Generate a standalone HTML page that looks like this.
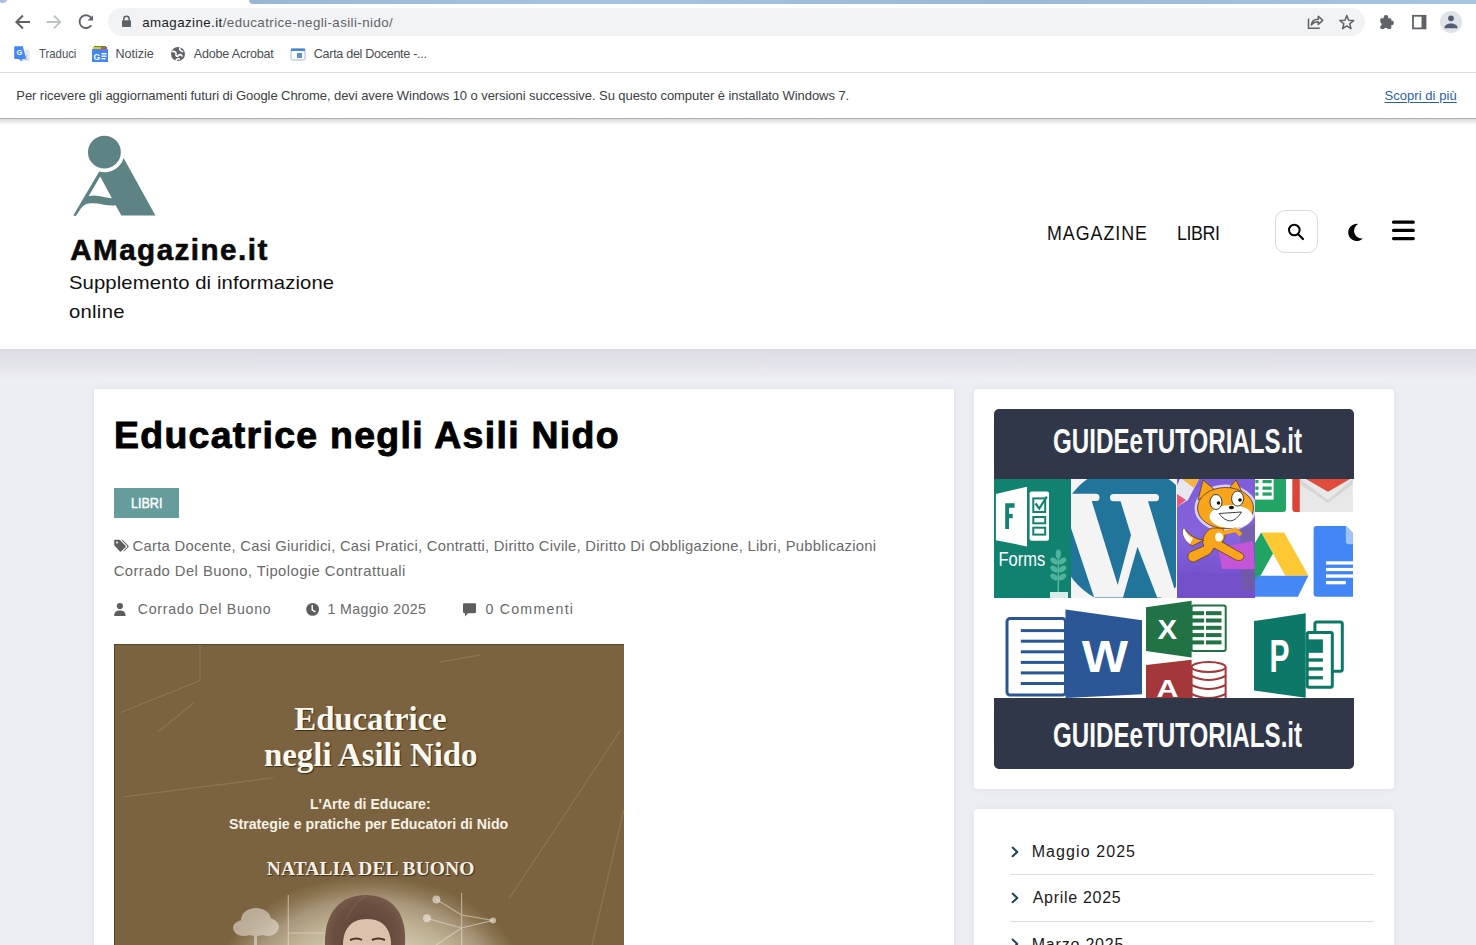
<!DOCTYPE html>
<html><head><meta charset="utf-8">
<style>
*{margin:0;padding:0;box-sizing:border-box}
html,body{width:1476px;height:945px;overflow:hidden;background:#fff;font-family:"Liberation Sans",sans-serif}
.a{position:absolute}
.t{position:absolute;white-space:nowrap;line-height:1}
svg{position:absolute;overflow:visible}
</style></head><body>
<!-- ============ BROWSER CHROME ============ -->
<div class="a" style="left:0;top:0;width:1476px;height:73px;background:#fff"></div>
<div class="a" style="left:249px;top:0;width:1227px;height:4px;background:linear-gradient(90deg,#9cb6d6,#a7c3e4 30%,#9cb7d7 60%,#a9c4e3);border-bottom-left-radius:4px"></div>
<div class="a" style="left:-2px;top:-4px;width:9px;height:7px;background:#a9c1dc;border-radius:50%"></div>
<!-- nav icons -->
<svg style="left:0;top:0" width="110" height="40">
 <g fill="none" stroke="#5f6368" stroke-width="2" stroke-linecap="square">
  <path d="M29 22H16.8M22.2 16.2L16.4 22L22.2 27.8"/>
 </g>
 <g fill="none" stroke="#bdc1c6" stroke-width="1.8" stroke-linecap="square">
  <path d="M47.5 22H60M54.5 16.2L60.3 22L54.5 27.8"/>
 </g>
 <g fill="none" stroke="#5f6368" stroke-width="1.9">
  <path d="M91.3 25.2A6.4 6.4 0 1 1 91.6 18.6"/>
 </g>
 <path d="M93 15.2V20.6H87.6Z" fill="#5f6368"/>
</svg>
<!-- address bar -->
<div class="a" style="left:108px;top:8px;width:1257px;height:28px;background:#f1f3f4;border-radius:14px"></div>
<svg style="left:0;top:0" width="140" height="40">
 <path d="M123.8 20.5V19a2.7 2.7 0 0 1 5.4 0v1.5" fill="none" stroke="#5f6368" stroke-width="1.5"/>
 <rect x="122" y="20.3" width="9" height="6.7" rx="0.8" fill="#5f6368"/>
</svg>
<!-- right icons -->
<svg style="left:0;top:0" width="1476" height="45">
 <g fill="none" stroke="#5f6368" stroke-width="1.5">
  <path d="M1308.5 18.6V28.3H1319.8"/>
  <path d="M1311.3 25C1311.8 21 1314.5 19.3 1318.3 19.3V16.3L1322.7 20.4L1318.3 24.5V21.8C1315.3 21.8 1313 22.8 1311.3 25Z" stroke-linejoin="round"/>
 </g>
 <path d="M1346.80 15.60L1348.62 20.29L1353.65 20.58L1349.75 23.76L1351.03 28.62L1346.80 25.90L1342.57 28.62L1343.85 23.76L1339.95 20.58L1344.98 20.29Z" fill="none" stroke="#5f6368" stroke-width="1.5" stroke-linejoin="round"/>
 <g fill="#5f6368">
  <rect x="1380.3" y="18.3" width="11" height="10.7" rx="1.2"/>
  <circle cx="1386" cy="17.3" r="2.3"/>
  <circle cx="1391.6" cy="22.9" r="2.3"/>
 </g>
 <g fill="#fff"><circle cx="1379.6" cy="24.2" r="2"/><circle cx="1385.8" cy="29.7" r="2"/></g>
 <rect x="1413" y="15.8" width="12.5" height="12.6" fill="none" stroke="#5f6368" stroke-width="1.8"/>
 <rect x="1421.5" y="15.8" width="4" height="12.6" fill="#5f6368"/>
 <circle cx="1451" cy="22" r="11" fill="#e0e3e7"/>
 <circle cx="1451" cy="18.3" r="2.9" fill="#515d72"/>
 <path d="M1444.5 28.2c0-3 3-4.6 6.5-4.6s6.5 1.6 6.5 4.6z" fill="#515d72"/>
</svg>
<!-- bookmarks -->
<svg style="left:0;top:40px" width="320" height="32">
 <rect x="20" y="10" width="9.5" height="11" rx="1" fill="#e3e5e8"/>
 <path d="M22.5 15.5L27 19.5M27 15.5L22.5 19.5" stroke="#9aa0a6" stroke-width="1"/>
 <path d="M15.2 6.3H22.8L26 19H21.5L22.2 21.5L18.5 19H15.2A1 1 0 0 1 14.2 18V7.3A1 1 0 0 1 15.2 6.3Z" fill="#4285f4"/>
 <text x="16.6" y="15.3" font-size="7.5" fill="#fff" font-family="Liberation Sans" font-weight="bold">G</text>
 <rect x="92" y="9" width="16" height="13" fill="#4285f4"/>
 <rect x="94" y="6" width="12" height="3" fill="#34a853"/>
 <rect x="93" y="7" width="8" height="2" fill="#fbbc04"/><rect x="101" y="7" width="6" height="2" fill="#ea4335"/>
 <text x="93.6" y="19.5" font-size="8.5" fill="#fff" font-family="Liberation Sans" font-weight="bold">G</text>
 <rect x="101.5" y="13" width="5" height="1.4" fill="#fff"/><rect x="101.5" y="15.5" width="5" height="1.4" fill="#fff"/><rect x="101.5" y="18" width="4" height="1.4" fill="#fff"/>
 <circle cx="178" cy="14" r="7" fill="#5f6368"/>
 <path d="M172.5 11.5C175 11 176.5 12.5 176 14.5C175.5 16.5 177.5 17 178.5 15.5C179.5 14 181.5 14.5 182 16M180 7.8C179 9.5 180.5 11 182.5 11.5M176 20.6C176.5 19 178 18.5 179.5 19" fill="none" stroke="#fff" stroke-width="1.6" stroke-linecap="round"/>
 <rect x="291" y="9" width="14" height="11" rx="1.5" fill="#fff" stroke="#a4b8d4" stroke-width="1"/>
 <rect x="291" y="8.5" width="14" height="2.5" fill="#4a86d8"/>
 <rect x="297" y="13" width="5" height="5" fill="#5a8fd9"/>
</svg>
<div class="a" style="left:0;top:72px;width:1476px;height:1px;background:#dadce0"></div>
<!-- notice bar -->
<div class="a" style="left:0;top:118px;width:1476px;height:1px;background:#aeb0b1"></div>
<div class="a" style="left:0;top:119px;width:1476px;height:6px;background:linear-gradient(#d6d7d9,rgba(255,255,255,0))"></div>

<!-- ============ SITE ============ -->
<div class="a" style="left:0;top:349px;width:1476px;height:596px;background:#edeef3"></div>
<div class="a" style="left:0;top:349px;width:1476px;height:30px;background:linear-gradient(#dcdae4,#edeef3)"></div>
<div class="a" style="left:0;top:125px;width:1476px;height:224px;background:#fff"></div>

<!-- header logo -->
<svg style="left:0;top:0" width="200" height="230" viewBox="0 0 200 230">
 <g fill="#5d8385">
  <circle cx="104.4" cy="152.2" r="16.4"/>
  <path d="M99.2 171.6A20 20 0 0 0 123.6 157.9L155.4 215.6H121.4L115.6 205.2C108 207 100 202.3 89 203.4C85 203.8 82.5 206 80.5 209L76.5 215.2C75.6 216.3 74 216.2 73.4 215.2L99.2 171.6Z"/>
 </g>
 <path d="M100.2 176.6L111.9 198.2C104 197.8 97 194 88.6 196.2Z" fill="#fff"/>
</svg>
<!-- search / moon / hamburger -->
<div class="a" style="left:1275px;top:210px;width:43px;height:42.5px;border:1px solid #d9d9d9;border-radius:10px;background:#fff"></div>
<svg style="left:0;top:0" width="1476" height="300">
 <circle cx="1294.3" cy="230" r="5.3" fill="none" stroke="#000" stroke-width="2"/>
 <path d="M1298.2 234.2L1303 239" stroke="#000" stroke-width="2.2" stroke-linecap="round"/>
 <path d="M1358 223.9A8.58 8.58 0 1 0 1362.9 238.4A7.8 7.8 0 0 1 1358 223.9Z" fill="#000"/>
 <g stroke="#000" stroke-width="3.2" stroke-linecap="round">
  <path d="M1393.5 222.2H1413.3M1393.5 230.4H1413.3M1393.5 238.6H1413.3"/>
 </g>
</svg>
<!-- cards -->
<div class="a" style="left:94px;top:389px;width:860px;height:600px;background:#fff;box-shadow:0 0 6px rgba(120,120,150,.10)"></div>
<div class="a" style="left:974px;top:389px;width:420px;height:400px;background:#fff;border-radius:4px;box-shadow:0 0 6px rgba(120,120,150,.10)"></div>
<div class="a" style="left:974px;top:809px;width:420px;height:300px;background:#fff;border-radius:4px;box-shadow:0 0 6px rgba(120,120,150,.10)"></div>
<!-- badge -->
<div class="a" style="left:114px;top:488px;width:65px;height:30px;background:#669c9c"></div>
<!-- meta icons -->
<svg style="left:0;top:0" width="700" height="640">
 <g fill="#5e5e5e">
  <path d="M114.2 545.2L114.2 540.8C114.2 540.2 114.6 539.8 115.2 539.8H119.6L125.4 545.6C125.9 546.1 125.9 546.8 125.4 547.3L121.4 551.3C120.9 551.8 120.2 551.8 119.7 551.3Z"/>
  <circle cx="117" cy="542.6" r="1" fill="#fff"/>
  <path d="M121.4 539.8H122.6L128.2 545.5C128.7 546 128.7 546.8 128.2 547.3L123.9 551.6L123.3 551L127.1 547.1C127.5 546.7 127.5 546.2 127.1 545.8Z"/>
  <circle cx="119.9" cy="606" r="3.1"/>
  <path d="M114.2 616C114.2 612 116.2 610.4 119.9 610.4C123.6 610.4 125.6 612 125.6 616Z"/>
  <circle cx="312.6" cy="609.4" r="6.4"/>
  <path d="M312.2 605.5V609.8L315 611.6" stroke="#fff" stroke-width="1.4" fill="none" stroke-linecap="round"/>
  <path d="M463 604.5C463 603.7 463.6 603.2 464.4 603.2H474.6C475.4 603.2 476 603.7 476 604.5V611.8C476 612.6 475.4 613.2 474.6 613.2H468L465 616.4V613.2H464.4C463.6 613.2 463 612.6 463 611.8Z"/>
 </g>
</svg>
<!-- cover -->
<svg style="left:114px;top:644px" width="510" height="301" viewBox="114 644 510 301">
 <defs>
  <radialGradient id="glow" cx="370" cy="1009" r="165" gradientUnits="userSpaceOnUse" gradientTransform="translate(370 1009) scale(1 0.812) translate(-370 -1009)">
   <stop offset="0" stop-color="#e2dacb"/><stop offset=".5" stop-color="#d2c7b0"/><stop offset=".66" stop-color="#c0b393"/><stop offset=".81" stop-color="#a8977a"/><stop offset=".92" stop-color="#8b7552"/><stop offset="1" stop-color="#7b633f"/>
  </radialGradient>
  <radialGradient id="hair" cx="365" cy="935" r="45" gradientUnits="userSpaceOnUse"><stop offset="0" stop-color="#5a4034"/><stop offset=".7" stop-color="#6b5042"/><stop offset="1" stop-color="#7a5f4e"/></radialGradient>
 </defs>
 <rect x="114" y="644" width="510" height="301" fill="#7b633f"/>
 <g stroke="#9a8360" stroke-width="1.3" fill="none" opacity=".55">
  <path d="M200 644V680.6L120.4 712.5M193.6 703L158.6 731.6M123.6 796.9L273 777.8M620.6 730L509 898.8M623.8 809.6L592 945M480 655L440 662"/>
 </g>
 <ellipse cx="370" cy="1009" rx="165" ry="134" fill="url(#glow)"/>
 <g fill="#efe9de" opacity=".55">
  <ellipse cx="256" cy="920" rx="15" ry="12"/><ellipse cx="244" cy="928" rx="11" ry="8"/><ellipse cx="268" cy="927" rx="11" ry="9"/><ellipse cx="256" cy="931" rx="12" ry="5"/><rect x="254" y="928" width="3" height="17"/>
 </g>
 <g stroke="#f0ebe0" stroke-width="1.2" fill="none" opacity=".5">
  <path d="M288.3 895V945M288.3 933H325M461.6 893V945M436.4 899.4L461.6 915L493 920.4M427 918.3L461.6 928L493 920.4M461.6 928L436 945"/>
 </g>
 <g fill="#f2ede4" opacity=".6"><circle cx="436.4" cy="899.4" r="4"/><circle cx="427" cy="918.3" r="4"/><circle cx="493" cy="920.4" r="3"/></g>
 <path d="M325 945C324 914 339 895 366 895C393 895 407 914 405 945Z" fill="url(#hair)"/>
 <path d="M366 896C357 900 350 910 346 920" stroke="#7d6252" stroke-width="1.5" fill="none" opacity=".6"/>
 <path d="M343 945C343 930 350 919 367 919C384 919 391 930 391 945Z" fill="#dcc2ad"/>
 <path d="M350 940Q357 937 362 940M372 940Q378 937 385 940" stroke="#4a3225" stroke-width="2" fill="none"/>
</svg>
<div class="a" style="left:114px;top:644px;width:1px;height:301px;background:rgba(60,45,25,.6)"></div>
<div class="a" style="left:114px;top:644px;width:510px;height:1px;background:rgba(60,45,25,.5)"></div>
<!-- banner -->
<svg style="left:994px;top:409px" width="360" height="360" viewBox="994 409 360 360">
 <defs><clipPath id="bclip"><rect x="994" y="409" width="360" height="360" rx="5"/></clipPath>
 <clipPath id="wpc"><rect x="1071" y="479" width="106" height="119"/></clipPath>
 <linearGradient id="scg" x1="0" y1="0" x2="0" y2="1"><stop offset="0" stop-color="#7f5cd9"/><stop offset=".5" stop-color="#8563dc"/><stop offset="1" stop-color="#6c47c6"/></linearGradient>
 </defs>
 <g clip-path="url(#bclip)">
 <rect x="994" y="409" width="360" height="360" fill="#fff"/>
 <!-- forms -->
 <rect x="994" y="479" width="77" height="119" fill="#11826f"/>
 <path d="M995.9 494L1027 486.7V546.4L995.9 540.2Z" fill="#fff"/>
 <path d="M1005.2 503.3H1014.6V507.7H1009V514H1012.7V518.3H1009V529H1005.2Z" fill="#11826f"/>
 <rect x="1029.6" y="491.5" width="19.4" height="49.3" rx="2" fill="#fff"/>
 <g fill="none" stroke="#11826f" stroke-width="2"><rect x="1033.3" y="498.4" width="11.9" height="13.6"/><rect x="1033.3" y="517" width="11.9" height="6.3"/><rect x="1033.3" y="527.7" width="11.9" height="6.9"/></g>
 <path d="M1035.5 503.5L1039.3 508.5L1046.8 496.5" fill="none" stroke="#11826f" stroke-width="2.2"/>
 <text x="998.4" y="565.8" font-size="19.5" fill="#fff" font-family="Liberation Sans" textLength="46.8" lengthAdjust="spacingAndGlyphs">Forms</text>
 <g fill="#50b39b"><ellipse cx="1058.3" cy="554" rx="2.6" ry="4.5"/><ellipse cx="1054.2" cy="561" rx="4.3" ry="2.6" transform="rotate(35 1054.2 561)"/><ellipse cx="1062.4" cy="561" rx="4.3" ry="2.6" transform="rotate(-35 1062.4 561)"/><ellipse cx="1054.2" cy="569" rx="4.3" ry="2.6" transform="rotate(35 1054.2 569)"/><ellipse cx="1062.4" cy="569" rx="4.3" ry="2.6" transform="rotate(-35 1062.4 569)"/><ellipse cx="1054.2" cy="577" rx="4.3" ry="2.6" transform="rotate(35 1054.2 577)"/><ellipse cx="1062.4" cy="577" rx="4.3" ry="2.6" transform="rotate(-35 1062.4 577)"/><rect x="1057.5" y="556" width="1.6" height="36"/></g>
 <rect x="1050" y="592" width="18" height="6" fill="#d9ede8"/>
 <!-- wordpress -->
 <g clip-path="url(#wpc)">
  <rect x="1071" y="479" width="106" height="119" fill="#f4f4f4"/>
  <circle cx="1128" cy="536" r="70" fill="#21759b"/>
  <g fill="#f4f4f4">
   <rect x="1068" y="493.7" width="31.5" height="7.3" rx="3.6"/>
   <rect x="1110" y="494" width="49" height="7.3" rx="3.6"/>
   <path d="M1062 501H1091.7L1117.7 584.9L1131 535L1120.5 501H1148L1177 597.4H1157.2L1137.5 546.8L1123 597.4H1094.2Z"/>
  </g>
  <rect x="1176" y="479" width="2" height="119" fill="#f4f4f4"/>
 </g>
 <!-- scratch -->
 <rect x="1177" y="479" width="78" height="119" fill="url(#scg)"/>
 <path d="M1177 575C1195 567 1225 580 1255 571V598H1177Z" fill="#7250ca"/>
 <path d="M1240 528L1255 524V592L1242 590Z" fill="#6f5f92" opacity=".6"/>
 <path d="M1180 479H1199L1188 500L1177 507V485Z" fill="#e9e6f0"/>
 <path d="M1177 494L1186 500L1177 507Z" fill="#e8587a"/>
 <path d="M1182 479H1199L1194 488Z" fill="#f3b33d"/>
 <path d="M1218 548L1253 541L1255 569L1222 569Z" fill="#c355d6"/>
 <g stroke="#fff" stroke-width="3" stroke-linejoin="round" opacity=".7">
  <ellipse cx="1225.5" cy="508" rx="29.5" ry="22" fill="none"/>
 </g>
 <g fill="#f9a51b" stroke="#5a3e1e" stroke-width=".8" stroke-linejoin="round">
  <path d="M1198 500L1203 480L1215 490Z"/><path d="M1230 487L1236 480L1243 494Z"/>
  <path d="M1212 528C1206 530 1200 540 1204 546L1190 552C1186 556 1188 562 1194 562L1210 554L1214 548L1236 560C1241 562 1246 558 1243 554L1222 542C1226 538 1226 532 1222 528Z"/>
  <path d="M1204 540C1196 540 1188 534 1184 528C1181 532 1184 540 1192 546Z"/>
  <path d="M1223 533L1236 530L1241 535" fill="none" stroke-width="4" stroke="#f9a51b"/>
  <ellipse cx="1225.5" cy="508" rx="28" ry="20.5"/>
 </g>
 <path d="M1184 528C1181 532 1184 540 1190 544L1193 538C1188 536 1186 532 1184 528Z" fill="#fff"/>
 <ellipse cx="1219" cy="537" rx="4" ry="4.5" fill="#fff"/>
 <ellipse cx="1231" cy="516.5" rx="21.5" ry="11.5" fill="#fff"/>
 <g stroke="#2a2a2a" stroke-width=".9">
  <ellipse cx="1216" cy="502" rx="6" ry="7.5" fill="#fff"/>
  <ellipse cx="1237.6" cy="498.6" rx="6" ry="7.5" fill="#fff"/>
  <path d="M1219 513.5Q1231 529 1241.5 512Z" fill="#fff"/>
 </g>
 <circle cx="1218.5" cy="503" r="1.8" fill="#111"/><circle cx="1240" cy="500" r="1.8" fill="#111"/>
 <ellipse cx="1231.4" cy="507.5" rx="2.6" ry="1.8" fill="#111"/>
 <!-- google -->
 <rect x="1255" y="479" width="99" height="119" fill="#fff"/>
 <path d="M1255 479H1286V509A3 3 0 0 1 1283 512H1255Z" fill="#23a566"/>
 <rect x="1255" y="479" width="18.6" height="20.6" fill="#fff"/>
 <g fill="#23a566"><rect x="1255.3" y="480" width="3.2" height="3.2"/><rect x="1262.5" y="480" width="9.2" height="3.2"/><rect x="1255.3" y="486.5" width="3.2" height="3.3"/><rect x="1262.5" y="486.5" width="9.2" height="3.3"/><rect x="1255.3" y="492.4" width="3.2" height="3.3"/><rect x="1262.5" y="492.4" width="9.2" height="3.3"/></g>
 <path d="M1292.3 479H1299.9V512H1295.3A3 3 0 0 1 1292.3 509Z" fill="#db4437"/>
 <rect x="1299.9" y="479" width="53.1" height="33" fill="#e8e8e8"/>
 <path d="M1299.9 479L1328 500L1353 479V484L1328 503L1299.9 484Z" fill="#d6d6d6"/>
 <path d="M1306 479H1350L1328 491.7Z" fill="#e14b3b"/>
 <path d="M1261.2 532.4H1284.1L1308.4 575.7H1285.4Z" fill="#fcc934"/>
 <path d="M1261.2 532.4L1273 553.5L1260.5 575.7L1255 586V543Z" fill="#1fa463"/>
 <path d="M1257.9 575.7H1308.4L1297.9 596.7H1255V580Z" fill="#4587f4"/>
 <path d="M1316.6 525.9H1345.8L1353 533V596.7H1316.6A3 3 0 0 1 1313.6 593.7V528.9A3 3 0 0 1 1316.6 525.9Z" fill="#4285f4"/>
 <path d="M1345.8 525.9L1353 533V544.2H1349A3.2 3.2 0 0 1 1345.8 541Z" fill="#a1c2fa"/>
 <g fill="#fff"><rect x="1326" y="561.3" width="27" height="3.3"/><rect x="1326" y="567.9" width="27" height="3.2"/><rect x="1326" y="574.4" width="27" height="3.3"/><rect x="1326" y="581" width="19.8" height="3.3"/></g>
 <!-- office row -->
 <rect x="1007" y="618.6" width="58.5" height="76.4" rx="3" fill="#fff" stroke="#2b5797" stroke-width="3"/>
 <g fill="#2b5797"><rect x="1020.8" y="629.1" width="45" height="3"/><rect x="1020.8" y="639.7" width="45" height="3"/><rect x="1020.8" y="650.3" width="45" height="3"/><rect x="1020.8" y="660.9" width="45" height="3"/><rect x="1020.8" y="671.4" width="45" height="3"/><rect x="1020.8" y="682" width="45" height="3"/></g>
 <path d="M1065.5 609.6L1142 620.2V694.2L1065.5 698Z" fill="#2b5797"/>
 <text x="1081.8" y="672.2" font-size="44" font-weight="bold" fill="#fff" font-family="Liberation Sans" textLength="46.3" lengthAdjust="spacingAndGlyphs">W</text>
 <rect x="1191.6" y="605.6" width="34.1" height="45.5" rx="2" fill="#fff" stroke="#217346" stroke-width="2"/>
 <g fill="#217346"><rect x="1191.6" y="611.2" width="12.5" height="4"/><rect x="1206" y="611.2" width="15.5" height="4"/><rect x="1191.6" y="618.5" width="12.5" height="4"/><rect x="1206" y="618.5" width="15.5" height="4"/><rect x="1191.6" y="625.8" width="12.5" height="4"/><rect x="1206" y="625.8" width="15.5" height="4"/><rect x="1191.6" y="633.1" width="12.5" height="4"/><rect x="1206" y="633.1" width="15.5" height="4"/><rect x="1191.6" y="640.4" width="12.5" height="4"/><rect x="1206" y="640.4" width="15.5" height="4"/></g>
 <path d="M1146 607.2L1191.6 600.7V657.6L1146 651.1Z" fill="#217346"/>
 <text x="1157.4" y="638.9" font-size="28" font-weight="bold" fill="#fff" font-family="Liberation Sans" textLength="19.6" lengthAdjust="spacingAndGlyphs">X</text>
 <g fill="#fff" stroke="#a4373a" stroke-width="2"><path d="M1191.6 667V700H1225.6V667"/><ellipse cx="1208.6" cy="667" rx="17" ry="5"/></g>
 <g fill="none" stroke="#a4373a" stroke-width="2"><path d="M1191.6 676Q1208.6 684 1225.6 676M1191.6 685Q1208.6 693 1225.6 685M1191.6 694Q1208.6 702 1225.6 694"/></g>
 <path d="M1146 664.9L1191.6 659.7V698H1146Z" fill="#a4373a"/>
 <text x="1156.6" y="697" font-size="24" font-weight="bold" fill="#fff" font-family="Liberation Sans" textLength="22" lengthAdjust="spacingAndGlyphs">A</text>
 <rect x="1314.9" y="622.1" width="27.4" height="49.1" rx="2" fill="#fff" stroke="#0e7868" stroke-width="3"/>
 <rect x="1307.2" y="632.6" width="25.1" height="54.7" rx="1.5" fill="#fff" stroke="#0e7868" stroke-width="3"/>
 <g fill="#0e7868"><rect x="1305.7" y="639.4" width="17.2" height="13.4"/><rect x="1305.7" y="658.3" width="17.2" height="3.4"/><rect x="1305.7" y="667.2" width="17.2" height="3.4"/><rect x="1305.7" y="676.1" width="17.2" height="3.3"/></g>
 <path d="M1254 621.1L1305.7 613.3V697.8L1254 690.6Z" fill="#0e7868"/>
 <text x="1269.6" y="672.2" font-size="46" font-weight="bold" fill="#fff" font-family="Liberation Sans" textLength="20" lengthAdjust="spacingAndGlyphs">P</text>
 <!-- bars -->
 <rect x="994" y="409" width="360" height="70" fill="#2f3748"/>
 <rect x="994" y="698" width="360" height="71" fill="#2f3748"/>
 </g>
</svg>
<!-- archive -->
<svg style="left:0;top:0" width="1476" height="945">
 <g fill="none" stroke="#1b4457" stroke-width="2" stroke-linecap="round" stroke-linejoin="round">
  <path d="M1012.6 847.6L1017.3 851.9L1012.6 856.2M1012.6 893.6L1017.3 897.9L1012.6 902.2M1012.6 939.6L1017.3 943.9L1012.6 948.2"/>
 </g>
 <rect x="1010" y="874" width="364" height="1" fill="#dcdcdc"/>
 <rect x="1010" y="921" width="364" height="1" fill="#dcdcdc"/>
</svg>
<div class="t" id="url" style="left:142.20px;top:15.61px;font-size:13.3px;color:#202124;font-weight:400;font-family:'Liberation Sans',sans-serif;letter-spacing:0.425px;">amagazine.it<span style="color:#5f6368">/educatrice-negli-asili-nido/</span><span class="bm" style="display:inline-block;width:0;height:0"></span></div>
<div class="t" id="bm1" style="left:38.70px;top:48.01px;font-size:12.6px;color:#4a4e52;font-weight:400;font-family:'Liberation Sans',sans-serif;transform:scaleX(0.9001);transform-origin:0 0;">Traduci<span class="bm" style="display:inline-block;width:0;height:0"></span></div>
<div class="t" id="bm2" style="left:115.40px;top:48.01px;font-size:12.6px;color:#4a4e52;font-weight:400;font-family:'Liberation Sans',sans-serif;letter-spacing:-0.033px;">Notizie<span class="bm" style="display:inline-block;width:0;height:0"></span></div>
<div class="t" id="bm3" style="left:193.80px;top:48.01px;font-size:12.6px;color:#4a4e52;font-weight:400;font-family:'Liberation Sans',sans-serif;letter-spacing:-0.217px;">Adobe Acrobat<span class="bm" style="display:inline-block;width:0;height:0"></span></div>
<div class="t" id="bm4" style="left:313.80px;top:48.01px;font-size:12.6px;color:#4a4e52;font-weight:400;font-family:'Liberation Sans',sans-serif;letter-spacing:-0.314px;">Carta del Docente -...<span class="bm" style="display:inline-block;width:0;height:0"></span></div>
<div class="t" id="notice" style="left:16.30px;top:88.70px;font-size:13.0px;color:#3c4043;font-weight:400;font-family:'Liberation Sans',sans-serif;letter-spacing:-0.068px;">Per ricevere gli aggiornamenti futuri di Google Chrome, devi avere Windows 10 o versioni successive. Su questo computer è installato Windows 7.<span class="bm" style="display:inline-block;width:0;height:0"></span></div>
<div class="t" id="scopri" style="left:1384.50px;top:88.60px;font-size:13.0px;color:#2a5db0;font-weight:400;font-family:'Liberation Sans',sans-serif;letter-spacing:0.050px;text-decoration:underline;text-underline-offset:1.5px">Scopri di più<span class="bm" style="display:inline-block;width:0;height:0"></span></div>
<div class="t" id="logo" style="left:70.20px;top:235.00px;font-size:29.6px;color:#0a0a0a;font-weight:700;font-family:'Liberation Sans',sans-serif;letter-spacing:1.473px;-webkit-text-stroke:0.6px #0a0a0a">AMagazine.it<span class="bm" style="display:inline-block;width:0;height:0"></span></div>
<div class="t" id="tag1" style="left:69.40px;top:274.80px;font-size:17.8px;color:#111;font-weight:400;font-family:'Liberation Sans',sans-serif;letter-spacing:0.085px;transform:scaleX(1.14);transform-origin:0 0;">Supplemento di informazione<span class="bm" style="display:inline-block;width:0;height:0"></span></div>
<div class="t" id="tag2" style="left:69.40px;top:304.10px;font-size:17.8px;color:#111;font-weight:400;font-family:'Liberation Sans',sans-serif;letter-spacing:0.235px;transform:scaleX(1.14);transform-origin:0 0;">online<span class="bm" style="display:inline-block;width:0;height:0"></span></div>
<div class="t" id="nav1" style="left:1046.90px;top:223.00px;font-size:20.3px;color:#111;font-weight:400;font-family:'Liberation Sans',sans-serif;letter-spacing:1.088px;transform:scaleX(0.88);transform-origin:0 0;">MAGAZINE<span class="bm" style="display:inline-block;width:0;height:0"></span></div>
<div class="t" id="nav2" style="left:1176.80px;top:223.00px;font-size:20.3px;color:#111;font-weight:400;font-family:'Liberation Sans',sans-serif;letter-spacing:-0.511px;transform:scaleX(0.88);transform-origin:0 0;">LIBRI<span class="bm" style="display:inline-block;width:0;height:0"></span></div>
<div class="t" id="title" style="left:114.00px;top:418.20px;font-size:36.3px;color:#000;font-weight:700;font-family:'Liberation Sans',sans-serif;letter-spacing:1.284px;transform:scaleX(1.03);transform-origin:0 0;-webkit-text-stroke:0.9px #000">Educatrice negli Asili Nido<span class="bm" style="display:inline-block;width:0;height:0"></span></div>
<div class="t" id="badge" style="left:131.00px;top:495.91px;font-size:14.0px;color:#fff;font-weight:400;font-family:'Liberation Sans',sans-serif;transform:scaleX(0.8965);transform-origin:0 0;-webkit-text-stroke:0.45px #fff">LIBRI<span class="bm" style="display:inline-block;width:0;height:0"></span></div>
<div class="t" id="tags1" style="left:132.50px;top:539.01px;font-size:14.8px;color:#6a6a6a;font-weight:400;font-family:'Liberation Sans',sans-serif;letter-spacing:0.271px;">Carta Docente, Casi Giuridici, Casi Pratici, Contratti, Diritto Civile, Diritto Di Obbligazione, Libri, Pubblicazioni<span class="bm" style="display:inline-block;width:0;height:0"></span></div>
<div class="t" id="tags2" style="left:113.70px;top:564.01px;font-size:14.8px;color:#6a6a6a;font-weight:400;font-family:'Liberation Sans',sans-serif;letter-spacing:0.445px;">Corrado Del Buono, Tipologie Contrattuali<span class="bm" style="display:inline-block;width:0;height:0"></span></div>
<div class="t" id="meta1" style="left:137.80px;top:602.10px;font-size:14.2px;color:#6a6a6a;font-weight:400;font-family:'Liberation Sans',sans-serif;letter-spacing:0.713px;">Corrado Del Buono<span class="bm" style="display:inline-block;width:0;height:0"></span></div>
<div class="t" id="meta2" style="left:327.40px;top:602.10px;font-size:14.2px;color:#6a6a6a;font-weight:400;font-family:'Liberation Sans',sans-serif;letter-spacing:0.383px;">1 Maggio 2025<span class="bm" style="display:inline-block;width:0;height:0"></span></div>
<div class="t" id="meta3" style="left:485.50px;top:602.10px;font-size:14.2px;color:#6a6a6a;font-weight:400;font-family:'Liberation Sans',sans-serif;letter-spacing:1.222px;">0 Commenti<span class="bm" style="display:inline-block;width:0;height:0"></span></div>
<div class="t" id="arc1" style="left:1031.70px;top:843.80px;font-size:16.0px;color:#1a1a1a;font-weight:400;font-family:'Liberation Sans',sans-serif;letter-spacing:1.080px;">Maggio 2025<span class="bm" style="display:inline-block;width:0;height:0"></span></div>
<div class="t" id="arc2" style="left:1032.70px;top:890.01px;font-size:16.0px;color:#1a1a1a;font-weight:400;font-family:'Liberation Sans',sans-serif;letter-spacing:0.700px;">Aprile 2025<span class="bm" style="display:inline-block;width:0;height:0"></span></div>
<div class="t" id="arc3" style="left:1031.70px;top:936.51px;font-size:16.0px;color:#1a1a1a;font-weight:400;font-family:'Liberation Sans',sans-serif;letter-spacing:0.800px;">Marzo 2025<span class="bm" style="display:inline-block;width:0;height:0"></span></div>
<div class="t" id="gt1" style="left:1053.00px;top:423.61px;font-size:34.5px;color:#fafafa;font-weight:700;font-family:'Liberation Sans',sans-serif;transform:scaleX(0.7000);transform-origin:0 0;">GUIDEeTUTORIALS.it<span class="bm" style="display:inline-block;width:0;height:0"></span></div>
<div class="t" id="gt2" style="left:1053.00px;top:718.40px;font-size:34.5px;color:#fafafa;font-weight:700;font-family:'Liberation Sans',sans-serif;transform:scaleX(0.7000);transform-origin:0 0;">GUIDEeTUTORIALS.it<span class="bm" style="display:inline-block;width:0;height:0"></span></div>
<div class="t" id="cv1" style="left:294.30px;top:702.50px;font-size:33.0px;color:#fbf8f0;font-weight:700;font-family:'Liberation Serif',sans-serif;letter-spacing:-0.178px;text-shadow:1px 1px 1px rgba(40,30,15,.8)">Educatrice<span class="bm" style="display:inline-block;width:0;height:0"></span></div>
<div class="t" id="cv2" style="left:264.00px;top:739.21px;font-size:33.0px;color:#fbf8f0;font-weight:700;font-family:'Liberation Serif',sans-serif;letter-spacing:-0.067px;text-shadow:1px 1px 1px rgba(40,30,15,.8)">negli Asili Nido<span class="bm" style="display:inline-block;width:0;height:0"></span></div>
<div class="t" id="cv3" style="left:309.60px;top:795.70px;font-size:15.5px;color:#f6f1e6;font-weight:700;font-family:'Liberation Sans',sans-serif;transform:scaleX(0.9077);transform-origin:0 0;">L'Arte di Educare:<span class="bm" style="display:inline-block;width:0;height:0"></span></div>
<div class="t" id="cv4" style="left:229.40px;top:815.60px;font-size:15.5px;color:#f6f1e6;font-weight:700;font-family:'Liberation Sans',sans-serif;transform:scaleX(0.9158);transform-origin:0 0;">Strategie e pratiche per Educatori di Nido<span class="bm" style="display:inline-block;width:0;height:0"></span></div>
<div class="t" id="cv5" style="left:266.80px;top:859.00px;font-size:19.5px;color:#f6f1e6;font-weight:700;font-family:'Liberation Serif',sans-serif;letter-spacing:0.088px;text-shadow:1px 1px 1px rgba(40,30,15,.8)">NATALIA DEL BUONO<span class="bm" style="display:inline-block;width:0;height:0"></span></div>
</body></html>
